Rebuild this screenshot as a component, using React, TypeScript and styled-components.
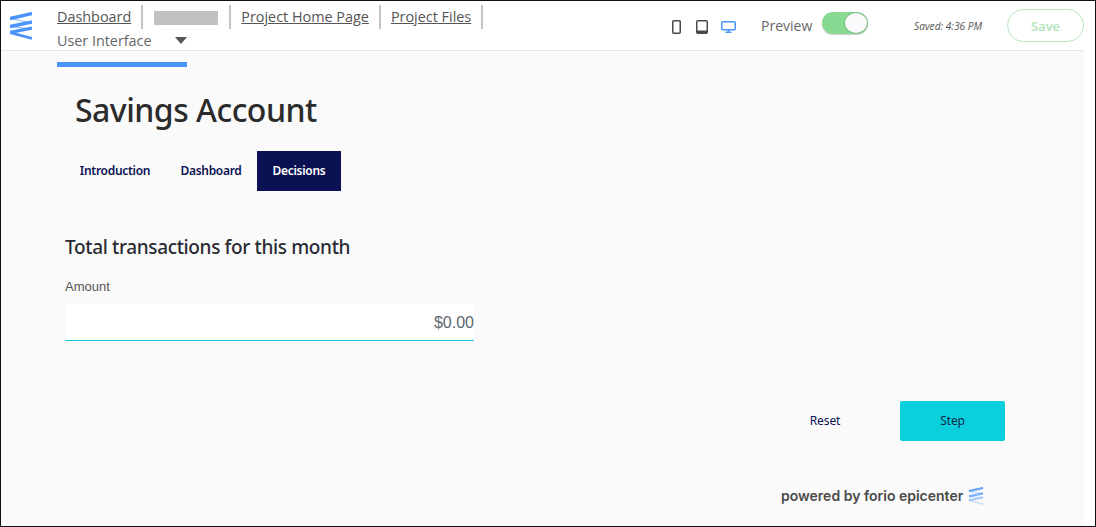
import React from "react";
import styled, { createGlobalStyle } from "styled-components";

const Global = createGlobalStyle`
  html, body { margin: 0; padding: 0; background: #fff; }
  * { box-sizing: border-box; }
  #root { width: 1096px; height: 527px; overflow: hidden; }
`;

const Frame = styled.div`
  width: 1096px; height: 527px; border: 1px solid #111; background: #fff;
  display: flex; flex-direction: column; overflow: hidden;
  font-family: "Open Sans", sans-serif;
`;
const Header = styled.header`
  height: 50px; flex: none; width: 1083px; border-bottom: 1px solid #e1e8ee;
  display: flex; align-items: flex-start; position: relative;
`;
const LogoBox = styled.div`
  width: 56px; flex: none; padding: 11px 0 0 9px; display: flex;
`;
const NavBox = styled.nav`
  width: 480px; flex: none; display: flex; flex-direction: column; padding-top: 4px;
`;
const NavRow = styled.div`display: flex; align-items: center; height: 24px;`;
const NavLink = styled.a`
  font-size: 14.4px; line-height: 24px; color: #555; text-decoration: underline; white-space: nowrap;
`;
const Sep = styled.span<{ $gap: number }>`
  width: 2px; height: 24px; background: #c4c4c4; flex: none; margin: 0 ${p => p.$gap}px 0 10px;
`;
const Redacted = styled.span`
  width: 64px; height: 14px; background: #c1c1c1; flex: none; margin-top: 1px; margin-right: 1px;
`;
const ActiveTab = styled.div`
  position: relative; display: flex; align-items: center; width: 130px; height: 24px; padding-bottom: 2px;
  font-size: 14.35px; color: #666;
`;
const Caret = styled.span`
  position: absolute; left: 117.5px; top: 8px; width: 0; height: 0;
  border-left: 6.5px solid transparent; border-right: 6.5px solid transparent; border-top: 7px solid #555;
`;
const ActiveBar = styled.span`
  position: absolute; left: 0; top: 33px; width: 130px; height: 5px; background: #4b94fb;
`;
const Devices = styled.div`
  margin-left: 135px; display: flex; align-items: center; gap: 12px; height: 52px; flex: none;
`;
const PreviewLabel = styled.span`
  font-size: 14px; color: #666; margin-left: 25px; width: 61px; flex: none; line-height: 50px;
`;
const Toggle = styled.span`
  position: relative; margin-top: 11px; width: 46px; height: 22px; border-radius: 11px; background: #88d992; flex: none;
  box-shadow: 0 1px 1px rgba(0,0,0,.2);
`;
const Knob = styled.span`
  position: absolute; right: 1px; top: 1px; width: 22px; height: 20px; border-radius: 50%; background: #fafafa;
  box-shadow: 0 0 2px rgba(0,0,0,.35);
`;
const Saved = styled.span`
  font-size: 10.2px; font-style: italic; color: #555; margin-left: 46px; width: 93px; flex: none; line-height: 50px;
`;
const SaveButton = styled.button`
  width: 77px; height: 33px; margin-top: 8px; border-radius: 17px; border: 1px solid #b6e6bd; background: #fff;
  color: #b0e5b8; font: 600 13px "Open Sans", sans-serif; padding: 0; flex: none;
`;
const Body = styled.main`
  width: 1083px; flex: 1; background: #fafafa; display: flex; flex-direction: column; padding: 40px 0 0 64px;
`;
const Title = styled.h1`
  margin: -1px 0 1px 10px; font: 500 32px/40px "Noto Sans", sans-serif; letter-spacing: -.52px; color: #2b2b2b;
`;
const Tabs = styled.div`display: flex; margin-top: 20px;`;
const Tab = styled.div<{ $active?: boolean; $w: number }>`
  width: ${p => p.$w}px; height: 40px; padding-bottom: 2px; display: flex; align-items: center; justify-content: center;
  font: 600 12px "Noto Sans", sans-serif; letter-spacing: -.3px; background: ${p => (p.$active ? "#0a1253" : "transparent")};
  color: ${p => (p.$active ? "#fff" : "#0a1253")};
`;
const Section = styled.h2`
  margin: 43px 0 0; font: 500 19px/26px "Noto Sans", sans-serif; letter-spacing: -.36px; color: #2a2a33;
`;
const Label = styled.label`
  margin-top: 19px; font: 13px/16px "Liberation Sans", sans-serif; color: #555;
`;
const Field = styled.div`
  margin-top: 9px; width: 409px; height: 37px; padding-top: 2px; background: #fff; border-bottom: 1px solid #0ccfdd;
  display: flex; align-items: center; justify-content: flex-end;
  font: 16px "Liberation Sans", sans-serif; color: #5c6670;
`;
const Actions = styled.div`
  margin-top: 60px; margin-left: 694px; display: flex; align-items: center;
`;
const ResetBtn = styled.button`
  width: 141px; height: 40px; background: transparent; border: 0; padding: 0 9px 2px 0;
  font: 12px "Noto Sans", sans-serif; letter-spacing: -.1px; color: #0a1253;
`;
const StepBtn = styled.button`
  width: 105px; height: 40px; background: #0ccfdd; border: 0; border-radius: 2px; padding: 0 0 2px;
  font: 12px "Noto Sans", sans-serif; letter-spacing: -.1px; color: #0a2a4a;
`;
const Powered = styled.div`
  margin-top: 46px; margin-left: 716px; display: flex; align-items: center; gap: 5px;
  font: 600 14px/16px "Inter", sans-serif; color: #4a4a4a;
`;

const Zig = ({ w, h, fade }: { w: number; h: number; fade?: boolean }) => (
  <svg width={w} height={h} viewBox="0 0 22 28" fill="none" stroke="#4b94fb">
    <path d="M22 1.5 L0 6.5" strokeWidth="3.4" opacity={fade ? 0.85 : 1} />
    <path d="M0 6.5 L22 11" strokeWidth="1.2" opacity={fade ? 0.45 : 0.65} />
    <path d="M22 10 L0 14.5" strokeWidth="3.4" opacity={fade ? 0.7 : 1} />
    <path d="M0 14.5 L22 17" strokeWidth="1.2" opacity={fade ? 0.3 : 0.65} />
    <path d="M22 16 L0 20.5" strokeWidth="3.2" opacity={fade ? 0.45 : 1} />
    <path d="M0 20.5 L22 26.5" strokeWidth="2.8" opacity={fade ? 0.25 : 1} />
  </svg>
);

export default function App() {
  return (
    <Frame>
      <Global />
      <Header>
        <LogoBox><Zig w={22} h={28} /></LogoBox>
        <NavBox>
          <NavRow>
            <NavLink>Dashboard</NavLink><Sep $gap={11} />
            <Redacted /><Sep $gap={10} />
            <NavLink>Project Home Page</NavLink><Sep $gap={10} />
            <NavLink>Project Files</NavLink><Sep $gap={0} />
          </NavRow>
          <ActiveTab>User Interface<Caret /><ActiveBar /></ActiveTab>
        </NavBox>
        <Devices>
          <svg width="12" height="14" viewBox="0 0 12 14" fill="none"><rect x="0.75" y="0.75" width="7.5" height="12.5" rx="1" stroke="#4a4a4a" strokeWidth="1.5" /></svg>
          <svg width="13" height="14" viewBox="0 0 13 14" fill="none"><rect x="0.75" y="0.75" width="10.5" height="12.5" rx="1" stroke="#4a4a4a" strokeWidth="1.5" /><rect x="1" y="10.5" width="10" height="2.5" fill="#4a4a4a" /></svg>
          <svg width="15" height="12" viewBox="0 0 15 12" fill="none"><rect x="0.75" y="0.75" width="13.5" height="8" rx="1" stroke="#4b94fb" strokeWidth="1.5" /><path d="M4.5 11.25h6M7.5 9v2" stroke="#4b94fb" strokeWidth="1.5" /></svg>
        </Devices>
        <PreviewLabel>Preview</PreviewLabel>
        <Toggle><Knob /></Toggle>
        <Saved>Saved: 4:36 PM</Saved>
        <SaveButton>Save</SaveButton>
      </Header>
      <Body>
        <Title>Savings Account</Title>
        <Tabs>
          <Tab $w={100}>Introduction</Tab>
          <Tab $w={92}>Dashboard</Tab>
          <Tab $w={84} $active>Decisions</Tab>
        </Tabs>
        <Section>Total transactions for this month</Section>
        <Label>Amount</Label>
        <Field>$0.00</Field>
        <Actions>
          <ResetBtn>Reset</ResetBtn>
          <StepBtn>Step</StepBtn>
        </Actions>
        <Powered>powered by forio epicenter <Zig w={16} h={18} fade /></Powered>
      </Body>
    </Frame>
  );
}
